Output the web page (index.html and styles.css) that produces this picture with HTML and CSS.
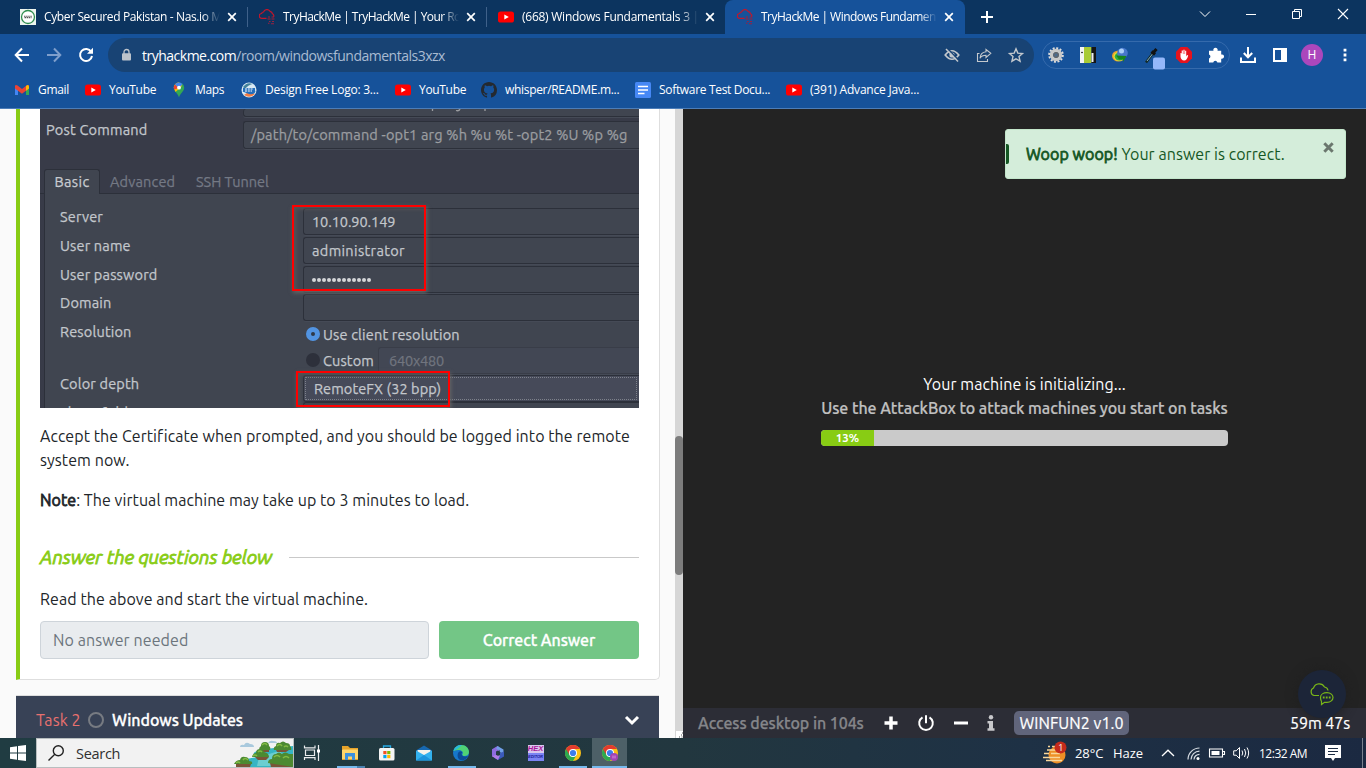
FILE: index.html
```html
<!DOCTYPE html>
<html lang="en">
<head>
<meta charset="utf-8">
<title>TryHackMe | Windows Fundamentals 3</title>
<link rel="stylesheet" href="styles.css">
</head>
<body>
<svg class="defs" width="0" height="0">
  <defs>
    <symbol id="x" viewBox="0 0 10 10"><path d="M1.2 1.2 8.8 8.8M8.8 1.2 1.2 8.8" stroke="currentColor" stroke-width="1.7" fill="none"/></symbol>
    <symbol id="xb" viewBox="0 0 10 10"><path d="M1.2 1.2 8.8 8.8M8.8 1.2 1.2 8.8" stroke="currentColor" stroke-width="2.7" fill="none"/></symbol>
    <symbol id="yt" viewBox="0 0 16 12"><rect y=".4" width="16" height="11.2" rx="2.6" fill="#f00"/><path d="M6.3 3.4 10.8 6 6.3 8.6z" fill="#fff"/></symbol>
    <symbol id="thm" viewBox="0 0 16 16"><path d="M7.500 9.300H2.800A2.400 2.400 0 0 1 2.600 4.500 2 2 0 0 1 4.500 3 3.600 3.600 0 0 1 11 2.300 3 3 0 0 1 13.500 4.800 2.300 2.300 0 0 1 14.500 8" fill="none" stroke="#c4162b" stroke-width="1.200"/><path d="M9 8h2M12.500 8h2.500M8.500 10h3M12.500 10h3" stroke="#a81d35" stroke-width="1.100"/><path d="M10 12.500h1.500M13 12.500h2M9 14.300h1.500M12 14.800h3" stroke="#9b2040" stroke-width="1.100"/></symbol>
    <symbol id="chrome" viewBox="0 0 16 16"><circle cx="8" cy="8" r="8" fill="#fbc116"/><path d="M8 8 1.070 4A8 8 0 0 0 8 16l3.500-6z" fill="#2da94f"/><path d="M1.070 4A8 8 0 0 1 14.930 4H8L4.500 10z" fill="#e33b2e"/><circle cx="8" cy="8" r="4" fill="#fff"/><circle cx="8" cy="8" r="3.100" fill="#3b7ded"/></symbol>
  </defs>
</svg>

<header class="browser">
  <div class="tabs">
    <div class="tab tab-1">
      <svg class="fav" viewBox="0 0 16 16"><path d="M0 0h16v16H0z" fill="#eef5ef"/><circle cx="8" cy="8" r="6.500" fill="#fff" stroke="#2f8d4e" stroke-width="1.300"/><path d="M4 7.200h8M4.500 8.600h7" stroke="#555" stroke-width="1.100" stroke-dasharray="1.500 .6"/></svg>
      <span class="tab-title t1">Cyber Secured Pakistan - Nas.io M</span>
      <svg class="close"><use href="#x"/></svg>
    </div>
    <div class="tab tab-2">
      <svg class="fav"><use href="#thm"/></svg>
      <span class="tab-title t2">TryHackMe | TryHackMe | Your Ro</span>
      <svg class="close"><use href="#x"/></svg>
    </div>
    <div class="tab tab-3">
      <svg class="fav"><use href="#yt"/></svg>
      <span class="tab-title t3">(668) Windows Fundamentals 3 |</span>
      <svg class="close"><use href="#x"/></svg>
    </div>
    <div class="tab tab-active">
      <svg class="fav"><use href="#thm"/></svg>
      <span class="tab-title t4">TryHackMe | Windows Fundamen</span>
      <svg class="close"><use href="#x"/></svg>
    </div>
    <svg class="new-tab" viewBox="0 0 12 12"><path d="M6 0v12M0 6h12" stroke="#fff" stroke-width="2"/></svg>
    <div class="window-controls">
      <svg width="12" height="12" viewBox="0 0 12 12"><path d="M1 3.500 6 8.500 11 3.500" fill="none" stroke="#fff" stroke-width="1"/></svg>
      <svg width="12" height="12" viewBox="0 0 12 12"><path d="M1 6.500h10" stroke="#fff"/></svg>
      <svg width="12" height="12" viewBox="0 0 12 12"><path d="M1.500 3.500h7v7h-7zM3.500 3.500v-2h7v7h-2" fill="none" stroke="#fff"/></svg>
      <svg width="12" height="12" viewBox="0 0 12 12"><path d="M1 1l10 10M11 1 1 11" stroke="#fff" stroke-width="1.100"/></svg>
    </div>
  </div>

  <div class="toolbar">
    <svg class="nav" viewBox="0 0 16 16"><path d="M15 8H2M8 1.500 1.700 8 8 14.500" fill="none" stroke="#fff" stroke-width="2"/></svg>
    <svg class="nav dim" viewBox="0 0 16 16"><path d="M1 8h13M8 1.500 14.300 8 8 14.500" fill="none" stroke="#7f9fcc" stroke-width="2"/></svg>
    <svg class="nav" viewBox="0 0 16 16"><path d="M13.200 4.800A6 6 0 1 0 14 9" fill="none" stroke="#fff" stroke-width="2"/><path d="M15 .8v6H9z" fill="#fff"/></svg>
    <div class="omnibox">
      <svg width="9" height="12" viewBox="0 0 9 12"><rect y="4.300" width="9" height="7.200" rx="1" fill="#bcc3cb"/><path d="M2 5V3a2.500 2.500 0 0 1 5 0v2" fill="none" stroke="#bcc3cb" stroke-width="1.300"/></svg>
      <span class="url"><b>tryhackme.com</b>/room/windowsfundamentals3xzx</span>
      <div class="omni-actions">
        <svg width="16" height="16" viewBox="0 0 16 16"><path d="M1.200 8q6.800-8.500 13.600 0q-6.800 8.500-13.600 0z" fill="none" stroke="#c3c8cd" stroke-width="1.700"/><circle cx="8" cy="8" r="2.600" fill="#c3c8cd"/><path d="m3 1 12 12.500" stroke="#184374" stroke-width="1.500"/><path d="m2 2 12 12.500" stroke="#c3c8cd" stroke-width="1.500"/></svg>
        <svg width="16" height="16" viewBox="0 0 16 16"><path d="M3.500 6.500H1.500v8h10v-2.500" fill="none" stroke="#c3c8cd" stroke-width="1.100"/><path d="M10 2.500 14.800 6.300 10 10.500V8.200C7 8.200 5.200 9 4 11.200 4.300 7.500 6.500 5 10 4.700z" fill="none" stroke="#c3c8cd" stroke-width="1.100"/></svg>
        <svg width="16" height="16" viewBox="0 0 16 16"><path d="m8 1.800 1.800 4.300 4.700.4L11 9.600l1.100 4.600L8 11.800l-4.100 2.400L5 9.600 1.500 6.500l4.700-.4z" fill="none" stroke="#c3c8cd" stroke-width="1.400"/></svg>
      </div>
    </div>
    <div class="extensions">
      <svg width="16" height="16" viewBox="0 0 16 16"><circle cx="8" cy="8" r="6.800" fill="none" stroke="#ddd" stroke-width="2" stroke-dasharray="2 1.560"/><circle cx="8" cy="8" r="4.500" fill="none" stroke="#c9c9c9" stroke-width="3.400"/><circle cx="8" cy="8" r="2.300" fill="#4c6b8d" stroke="#666" stroke-width="1.200"/></svg>
      <svg width="16" height="16" viewBox="0 0 16 16"><path d="M0 0h4v16H0z" fill="#f4f4f4"/><path d="M4 0h7.500v16H4z" fill="#a9cb35"/><path d="M11.500 0H16v16h-4.500z" fill="#151515"/><circle cx="2" cy="5.500" r=".8"/><path d="M11.500 6h2v9h-2z" fill="#eee"/></svg>
      <svg width="16" height="16" viewBox="0 0 16 16"><ellipse cx="6.500" cy="9" rx="6.500" ry="5.500" fill="#e8a22d"/><ellipse cx="7" cy="9.500" rx="5.500" ry="4.500" fill="#e9dd35"/><ellipse cx="7.500" cy="9.500" rx="4.800" ry="4" fill="#2cae47"/><circle cx="10.500" cy="6" r="5.300" fill="#4777cb"/><circle cx="9.500" cy="4" r="2.500" fill="#a9cff7"/><path d="M4 8.500 14.500 9 11 15V12.500H7z" fill="#16851c"/></svg>
      <svg width="20" height="22" viewBox="0 0 20 22"><path d="M2 15.500 9 6" stroke="#142c28" stroke-width="2.500"/><path d="m3 14 5.500-7" stroke="#93bad0" stroke-width=".9"/><path d="M7.500 4.500 11 7.500M9 6l3.500-4" stroke="#111" stroke-width="3"/><rect x="9" y="10.500" width="12" height="12" rx="2" fill="#94b7fa"/></svg>
      <svg width="16" height="16" viewBox="0 0 16 16"><path d="M4.700 0h6.600L16 4.700v6.600L11.300 16H4.700L0 11.300V4.700z" fill="#e6131d"/><path d="M4.500 6v3.500c0 2 1.500 4 3.700 4 2 0 3-1.500 4-5l-1.100-.4-.9 1.300V3.800H9.100V7h-.5V2.800H7.400V7h-.5V3.600H5.700V7l-.3-1z" fill="#fff"/></svg>
      <svg width="16" height="16" viewBox="0 0 16 16"><path d="M1 3.800h4.500a2.200 2.200 0 1 1 4 0h3.700v3.700a2.200 2.200 0 1 1 0 4.200v3.700H9.400a2.200 2.200 0 0 0-4.200 0H1v-3.900a2.200 2.200 0 0 0 0-4.100z" fill="#fff"/></svg>
    </div>
    <div class="chrome-actions">
      <svg width="16" height="16" viewBox="0 0 16 16"><path d="M8 0v10M3.800 6 8 10.300 12.200 6M1 10.500V15h14v-4.500" fill="none" stroke="#fff" stroke-width="2"/></svg>
      <svg width="14" height="14" viewBox="0 0 14 14"><path d="M1 1h12v12H1z" fill="none" stroke="#fff" stroke-width="2"/><path d="M8 0h6v14H8z" fill="#fff"/></svg>
      <span class="avatar">H</span>
      <svg width="4" height="14" viewBox="0 0 4 14"><path d="M.6.800h2.800v2.800H.6zM.6 5.600h2.800v2.800H.6zM.6 10.400h2.800v2.800H.6z" fill="#fff"/></svg>
    </div>
  </div>

  <nav class="bookmarks">
    <a class="bm bm-gmail"><svg width="16" height="12" viewBox="0 0 16 12"><path d="M2.500 11V4" stroke="#4285f4" stroke-width="3"/><path d="M13.500 11V4" stroke="#34a853" stroke-width="3"/><path d="M1 1.500v3L8 9.700l7-5.200v-3q-1-1-2.500 0L8 5 3.500 1.500Q2 .500 1 1.500z" fill="#ea4335"/><path d="M12 2 13.500 1Q15 1 15 2.500v2L12 6.700z" fill="#fbbc04"/></svg><span>Gmail</span></a>
    <a class="bm bm-yt"><svg width="16" height="12"><use href="#yt"/></svg><span>YouTube</span></a>
    <a class="bm bm-maps"><svg width="12" height="16" viewBox="0 0 12 16"><path d="M6 .5a5.200 5.200 0 0 1 5.200 5.200C11.200 9.500 7 11 6 15.500 5 11 .8 9.500.8 5.700A5.200 5.200 0 0 1 6 .5z" fill="#34a853"/><path d="M.8 5.700C.8 2.500 3.500.5 6 .5L9 4 2.500 10z" fill="#fbbc04"/><path d="M2 2.500 6 6 1 7.500Q.2 4.500 2 2.500z" fill="#ea4335"/><path d="M2 2.500Q5-1 9.500 2L6 6z" fill="#4285f4"/><circle cx="6" cy="5.700" r="1.900" fill="#fff"/></svg><span>Maps</span></a>
    <a class="bm bm-logo"><svg width="16" height="16" viewBox="0 0 16 16"><circle cx="8" cy="8" r="7.500" fill="#d9e9f4"/><path d="M3 13Q8 8 14 12 9 17 3 13z" fill="#f47b42"/><path d="M1.500 9.500Q8 4 14.500 9q-1 4-6.500 3z" fill="#246fbd"/><path d="M2 5Q6-.5 11.500 2 7 3 4 7z" fill="#41819b"/><path d="M2 6h12v3.500H2z" fill="#246fbd"/><path d="M4 7h8M4 9h7" stroke="#fff" stroke-width="1" stroke-dasharray="2 .8"/></svg><span>Design Free Logo: 3...</span></a>
    <a class="bm bm-yt2"><svg width="16" height="12"><use href="#yt"/></svg><span>YouTube</span></a>
    <a class="bm bm-git"><svg width="16" height="16" viewBox="0 0 16 16"><path fill="#24292f" d="M8 0C3.580 0 0 3.580 0 8c0 3.540 2.290 6.530 5.470 7.590.4.070.55-.17.55-.38v-1.490c-2.010.37-2.530-.49-2.690-.94-.09-.23-.48-.94-.82-1.130-.28-.15-.68-.52-.01-.53.63-.01 1.080.58 1.230.82.72 1.210 1.870.87 2.330.66.07-.52.28-.87.510-1.070-1.780-.2-3.640-.89-3.640-3.950 0-.87.31-1.590.82-2.150-.08-.2-.36-1.020.08-2.120 0 0 .67-.21 2.200.82a7.600 7.600 0 0 1 4 0c1.530-1.040 2.200-.82 2.200-.82.44 1.100.16 1.920.08 2.120.51.560.82 1.270.82 2.150 0 3.070-1.870 3.750-3.650 3.950.29.250.54.730.54 1.480v2.200c0 .21.15.46.55.38A8 8 0 0 0 16 8c0-4.420-3.580-8-8-8z"/></svg><span>whisper/README.m...</span></a>
    <a class="bm bm-doc"><svg width="16" height="16" viewBox="0 0 16 16"><rect width="16" height="16" rx="1.500" fill="#4688f5"/><path d="M3 4.500h10M3 8h10M3 11.500h6.500" stroke="#fff" stroke-width="1.600"/></svg><span>Software Test Docu...</span></a>
    <a class="bm bm-java"><svg width="16" height="12"><use href="#yt"/></svg><span>(391) Advance Java...</span></a>
  </nav>
</header>

<main class="workspace">
  <section class="room">
    <article class="task-card">
      <div class="remmina">
        <div class="pre-row"><span></span><div class="field"><svg width="70" height="3" viewBox="0 0 70 3"><path d="M8.500 0v2M61 0v2M32 1.500q3 1 4-1.500" fill="none" stroke="#9b9da0" stroke-width="1.300"/></svg></div></div>
        <div class="post-row"><span>Post Command</span><div class="field">/path/to/command -opt1 arg %h %u %t -opt2 %U %p %g</div></div>
        <div class="rtabs"><span class="rtab on">Basic</span><span class="rtab adv">Advanced</span><span class="rtab ssh">SSH Tunnel</span></div>
        <div class="rpanel">
          <div class="rrow"><span>Server</span><div class="field ip">10.10.90.149</div></div>
          <div class="rrow"><span>User name</span><div class="field admin">administrator</div></div>
          <div class="rrow"><span>User password</span><div class="field dots"><i></i><i></i><i></i><i></i><i></i><i></i><i></i><i></i><i></i><i></i><i></i><i></i></div></div>
          <div class="rrow"><span>Domain</span><div class="field"></div></div>
          <div class="rrow res"><span>Resolution</span><div class="radio-line"><i class="radio checked"></i><span class="ucr">Use client resolution</span></div></div>
          <div class="rrow custom"><span></span><div class="radio-line"><i class="radio"></i><span class="cus">Custom</span><div class="field size">640x480</div></div></div>
          <div class="rrow depth"><span>Color depth</span><div class="field combo">RemoteFX (32 bpp)</div></div>
          <div class="rrow share"><span>Share folder</span><div class="field"></div></div>
        </div>
        <div class="mark mark-login"></div>
        <div class="mark mark-depth"></div>
      </div>
      <p class="copy"><span class="l1">Accept the Certificate when prompted, and you should be logged into the remote</span><br><span class="l2">system now.</span></p>
      <p class="copy l3"><strong>Note</strong>: The virtual machine may take up to 3 minutes to load.</p>
      <h2 class="questions"><span>Answer the questions below</span></h2>
      <p class="copy question">Read the above and start the virtual machine.</p>
      <div class="answer"><div class="answer-input">No answer needed</div><div class="answer-btn">Correct Answer</div></div>
    </article>
    <article class="task-two">
      <span class="task-no">Task 2</span><i class="ring"></i><span class="task-name">Windows Updates</span>
      <svg class="chev" width="16" height="10" viewBox="0 0 16 10"><path d="m2 2 6 6 6-6" fill="none" stroke="#fff" stroke-width="3"/></svg>
    </article>
  </section>
  <div class="scroll"><div class="thumb"></div><svg width="8" height="9" viewBox="0 0 8 9"><path d="M1 2h7v7H1z" fill="#fff"/><path d="M4 8h1M6 6h1M7 4h1M6.500 8h1" stroke="#555"/></svg></div>

  <section class="machine">
    <div class="screen">
      <div class="toast"><i class="toast-bar"></i><span class="toast-text"><strong>Woop woop!</strong> Your answer is correct.</span><svg class="toast-x"><use href="#xb"/></svg></div>
      <div class="init">
        <div class="init-title">Your machine is initializing...</div>
        <div class="init-sub">Use the AttackBox to attack machines you start on tasks</div>
        <div class="progress"><div class="bar" style="width:13%">13%</div></div>
      </div>
      <div class="chat"><svg width="26" height="24" viewBox="0 0 26 24"><path d="M10 13.500H5A4 4 0 0 1 4.500 6 6 6 0 0 1 15.500 5 4 4 0 0 1 19 8.500" fill="none" stroke="#79b518" stroke-width="1.200"/><path d="M12.500 19.500V22.500l3-2.200h2.500c3.500 0 6-2.200 6-4.800s-2.500-4.800-6-4.800-6.500 1.800-6.500 4.800c0 1.800.5 3 1 4z" fill="none" stroke="#79b518" stroke-width="1.200"/><path d="M13.800 15.500h8" stroke="#79b518" stroke-width="1.800" stroke-dasharray="1.800 1.200"/></svg></div>
    </div>
    <footer class="machine-bar">
      <span class="access">Access desktop in 104s</span>
      <svg class="m-plus" width="14" height="14" viewBox="0 0 14 14"><path d="M7 .5v13M.5 7h13" stroke="#fff" stroke-width="3.500"/></svg>
      <svg class="m-power" width="16" height="16" viewBox="0 0 16 16"><path d="M4.500 2.300a6.800 6.800 0 1 0 7 0M8 .2v8" fill="none" stroke="#fff" stroke-width="2"/></svg>
      <svg class="m-minus" width="14" height="14" viewBox="0 0 14 14"><path d="M0 7h14" stroke="#fff" stroke-width="3"/></svg>
      <svg class="m-info" width="8" height="16" viewBox="0 0 8 16"><circle cx="4" cy="2.200" r="2.200" fill="#c8c8cb"/><path d="M.5 6H6v7.300h1.500v2.500h-7v-2.500H2V8.400H.5z" fill="#c8c8cb"/></svg>
      <span class="badge">WINFUN2 v1.0</span>
      <span class="timer">59m 47s</span>
    </footer>
  </section>
</main>

<footer class="taskbar">
  <div class="start"><svg width="16" height="16" viewBox="0 0 16 16"><path d="M0 2.200 7 1.200V7.500H0zM8 1 16 0v7.500H8zM0 8.500h7v6.300l-7-1zM8 8.500h8V16l-8-1.100z" fill="#fff"/></svg></div>
  <div class="search">
    <svg width="16" height="16" viewBox="0 0 16 16"><circle cx="10.300" cy="5.700" r="5" fill="none" stroke="#222" stroke-width="1.400"/><path d="M6.800 9.200.5 15.500" stroke="#222" stroke-width="1.400"/></svg>
    <span>Search</span>
    <svg class="islands" width="60" height="27" viewBox="0 0 60 27"><path d="M3 27Q8 18 27 17 12 13 32 9l28-3v21z" fill="#35b5c4"/><path d="m26 17 20-6 8 6-14 9H24z" fill="#6bced0"/><path d="M7 7q0-3 4-2 2-4 6-1 4 0 4 3zM35 3q2-3 5-2 4 0 4 2z" fill="#a9c9dd"/><path d="M27 10h9v2h-8zM43 10h13l-3 2H44zM22 17h14l-3 3H25zM37 23h22v4H38zM3 24h15l-1 3H3z" fill="#7a5538"/><path d="M26 10q0-3 2-4 0-4 4-4t4 4q2 1 1 4zM41 10q-1-3 2-4 0-4 4-3 3-3 6 0 4 0 4 3 2 2 1 4zM19 17q1-4 4-4 0-4 4-4 4 1 4 3 5 1 5 5zM35 23q0-4 4-4 0-5 4-5 3-3 6 0 3-3 7 0h4v13zM1 24q2-4 6-4 1-4 5-3 4 0 4 4 4 0 3 3z" fill="#4c8a31"/><path d="M29 5q3-3 5 0M44 6q3-3 5 0M51 7q2-2 4 0M25 12q2-2 4 0M20 16q2-2 4 0M41 17q3-3 6 0M50 18q3-3 6 0M10 20q2-3 5 0M3 23q2-2 4 0" fill="none" stroke="#83ba43" stroke-width="1.600"/></svg>
  </div>
  <div class="apps">
    <div class="app"><svg width="17" height="16" viewBox="0 0 17 16"><path d="M.5.5v2.300h10.500V.5M.5 15v-2.300h10.500V15M1.500 5h9v5.500h-9zM14.500 0v16" fill="none" stroke="#e9eced" stroke-width="1.200"/><path d="M13 4.500h3v3h-3z" fill="#fff"/></svg></div>
    <div class="app run explorer"><svg width="16" height="14" viewBox="0 0 16 14"><path d="M0 0h6l2 2h8v12H0z" fill="#e6a32a"/><path d="M1 3.500h15V13H0V4z" fill="#ffd66b"/><path d="M3 7h10v7h-3v-3.500H6V14H3z" fill="#3c91df"/></svg></div>
    <div class="app"><svg width="16" height="16" viewBox="0 0 16 16"><path d="M4.500 4V1h7v3" fill="none" stroke="#27a9e3" stroke-width="1.300"/><rect y="3" width="15.500" height="12.500" rx="1.500" fill="#f4f4f4"/><path d="M4.300 6h3.200v3.200H4.300z" fill="#f25022"/><path d="M8.200 6h3.200v3.200H8.200z" fill="#7fba00"/><path d="M4.300 10h3.200v3.200H4.300z" fill="#00a4ef"/><path d="M8.200 10h3.200v3.200H8.200z" fill="#ffb900"/></svg></div>
    <div class="app"><svg width="16" height="16" viewBox="0 0 16 16"><path d="m0 5.500 8-5 8 5V15H0z" fill="#1768b0"/><path d="M1.500 5h13v7h-13z" fill="#f3f3ec"/><path d="M0 5.500 8 10l8-4.500V15.500H0z" fill="#32b1ee"/><path d="m0 15.500 8-5.500 8 5.500z" fill="#1b94dc"/></svg></div>
    <div class="app run"><svg width="16" height="16" viewBox="0 0 16 16"><circle cx="8" cy="8" r="8" fill="#1677cb"/><path d="M.5 6C2 1 5.500 0 8.500 0 13 0 16 3.500 16 7c0 3-2.500 4.200-5 4-2-.2-2-1.300-1.200-2.300C10.500 6 7 3.500.5 6z" fill="#4fd275"/><path d="M.5 6C2 1 6 0 9 .1 5 4 4 4 .5 6z" fill="#29b9dc"/><path d="M5 8q1.500-3 4.500-1Q7.800 8.500 9 10.200q2 2 6 .8-3 5.500-8 4Q3.500 12.500 5 8z" fill="#0c4b96"/></svg></div>
    <div class="app"><svg width="16" height="16" viewBox="0 0 16 16"><path d="M7.500 1 2 4.200v7L6 13V8l3-2V2z" fill="#8e6be0"/><path d="m7.500 1 6 3.500V9L9.500 7V5L6 4z" fill="#6f9fe8"/><path d="M14 6.500v5L8 15l-4-2.200L10 10V8z" fill="#3b5bbb"/><path d="M2 11.200 6 10l4 .500L8 15z" fill="#af7ce7"/><path d="M6 6.500 8 5.500l2 1.200v3L8 10.800 6 9.700z" fill="#223a42"/></svg></div>
    <div class="app"><div class="hex"><b>HEX</b><b>EDITOR</b></div></div>
    <div class="app run chr"><svg width="16" height="16"><use href="#chrome"/></svg></div>
    <div class="app run active"><svg width="16" height="16" viewBox="0 0 16 16"><use href="#chrome"/><circle cx="12" cy="12" r="4" fill="#a243b5"/><path d="M10 11.200h4M10 12.800h4" stroke="#cf8bd9" stroke-width=".8"/></svg></div>
  </div>
  <div class="tray">
    <svg class="haze" width="26" height="24" viewBox="0 0 26 24"><circle cx="15" cy="14" r="8.500" fill="#ee8f25"/><path d="M6 5.500h2M10 5.500h5M5 9h11M9 12.500h9M2 12.500h5M1 16.500h17M4 19.500h16" stroke="#f9d79b" stroke-width="1.700"/><circle cx="18.500" cy="6.500" r="6" fill="#c42b1c"/><text x="16.300" y="10.200" class="haze-n">1</text></svg>
    <span class="temp">28°C</span><span class="cond">Haze</span>
    <svg class="t-up" width="14" height="8" viewBox="0 0 14 8"><path d="m1 7 6-5.800L13 7" fill="none" stroke="#fff" stroke-width="1.300"/></svg>
    <svg class="t-wifi" width="13" height="13" viewBox="0 0 13 13"><path d="M1 12.500A11.500 11.500 0 0 1 12.500 1M4 12.500a8.500 8.500 0 0 1 8.500-8.300M7 12.500a5.500 5.500 0 0 1 5.500-5.200" fill="none" stroke="#d5dbe1" stroke-width="1.200"/><circle cx="11" cy="11.500" r="1.500" fill="#fff"/></svg>
    <svg class="t-bat" width="16" height="10" viewBox="0 0 16 10"><path d="M.5 1h13v8H.5zM14 3.500h1.500v3H14" fill="none" stroke="#fff" stroke-width="1.100"/><path d="M2.500 3h8v4h-8z" fill="#fff"/></svg>
    <svg class="t-vol" width="17" height="14" viewBox="0 0 17 14"><path d="M.7 4.800h2.500L6.500 1.500v11L3.200 9.200H.7zM9 4.500q1.500 2.500 0 5M11.500 3q2.500 4 0 8M14 1.500q3.300 5.500 0 11" fill="none" stroke="#fff" stroke-width="1"/></svg>
    <span class="clock">12:32 AM</span>
    <svg class="t-note" width="16" height="16" viewBox="0 0 16 16"><path d="M0 0h16v13H10l-2 3-2-3H0z" fill="#fff"/><path d="M3 3.500h10M3 6.500h10M3 9.500h7" stroke="#1b2b42" stroke-width="1"/></svg>
  </div>
</footer>
</body>
</html>
```
FILE: styles.css
```css
* { box-sizing: border-box; }
body { margin: 0; width: 1366px; height: 768px; overflow: hidden; display: flex; flex-direction: column; background: #232323; font-family: "Segoe UI", "Open Sans", sans-serif; white-space: nowrap; }
svg { display: block; flex: none; overflow: visible; }
.defs { position: absolute; }
span { flex: none; }

/* Browser chrome */
.browser { height: 109px; flex: none; background: #16529a; border-bottom: 1px solid #4c7db8; color: #fff; font-size: 12px; }
.tabs { height: 38px; background: linear-gradient(#0c345f 34px, #16529a 34px); display: flex; position: relative; }
.tab { height: 34px; display: flex; align-items: center; }
.fav { width: 16px; height: 16px; }
.close { width: 10px; height: 10px; }
.tab-title { width: 176px; margin: 0 7px 0 8px; line-height: 18px; mask-image: linear-gradient(90deg, #000 90%, transparent); letter-spacing: -.38px; }
.tab-1 { width: 248px; padding-left: 20px; }
.tab-2 { width: 239px; padding-left: 11px; }
.tab-3 { width: 238px; padding-left: 11px; }
.tab-1::after, .tab-2::after { content: ""; width: 1px; height: 20px; background: #3f618a; margin-left: auto; }
.tab-active { width: 240px; padding-left: 12px; background: #16529a; border-radius: 8px 8px 0 0; }
.t2 { letter-spacing: -.55px; }
.t3 { letter-spacing: -.25px; }
.t4 { letter-spacing: -.53px; }
.new-tab { width: 12px; height: 12px; margin: 11px 0 0 16px; }
.window-controls { margin: 8px 17px 0 auto; display: flex; gap: 34px; }
.toolbar { height: 34px; display: flex; align-items: center; padding-left: 14px; }
.nav { width: 16px; height: 16px; margin-right: 16px; }
.omnibox { width: 926px; height: 34px; margin-left: -2px; border-radius: 17px; background: #184374; display: flex; align-items: center; padding: 0 10px 0 14px; }
.url { margin-left: 11px; font-size: 14px; letter-spacing: -.5px; color: #a9bbd2; }
.url b { font-weight: 400; color: #fff; }
.omni-actions { display: flex; gap: 16px; margin-left: auto; }
.extensions { width: 188px; height: 28px; margin-left: 8px; border: 1px solid #356aac; border-radius: 14px; display: flex; align-items: center; gap: 16px; padding-left: 5px; }
.extensions svg:nth-child(4) { margin: 6px -4px 0 0; }
.chrome-actions { display: flex; align-items: center; margin-left: 10px; }
.chrome-actions svg:nth-child(2) { margin: 0 14px 0 17px; }
.avatar { width: 22px; height: 22px; border-radius: 50%; background: #ab47bc; text-align: center; line-height: 22px; margin-right: 20px; }
.bookmarks { height: 36px; display: flex; align-items: center; padding-left: 14px; }
.bm { display: flex; align-items: center; gap: 8px; height: 20px; flex: none; letter-spacing: -.32px; line-height: 18px; }
.bm-gmail { width: 71px; } .bm-yt { width: 88px; } .bm-maps { width: 68px; gap: 10px; } .bm-logo { width: 154px; letter-spacing: -.23px; }
.bm-yt2 { width: 86px; } .bm-git { width: 154px; } .bm-doc { width: 151px; } .bm-java { letter-spacing: -.2px; }

/* Room column */
.workspace { height: 629px; flex: none; display: flex; }
.room { width: 675px; background: #fafafa; padding-left: 16px; font-family: Ubuntu, "Noto Sans", sans-serif; color: #212529; font-size: 16px; overflow: hidden; }
.task-card { width: 644px; height: 571px; background: #fff; border: 1px solid #dedede; border-width: 0 1px 1px 4px; border-left-color: #88cc14; border-radius: 0 0 5px 0; padding: 0 20px; }
.copy { margin: 16px 0; line-height: 24px; }
.copy strong, .toast strong { font-weight: 400; -webkit-text-stroke: .8px currentColor; }
.l1 { letter-spacing: .06px; }
.l2, .question { letter-spacing: .08px; }
.l3 { letter-spacing: .06px; }
.questions { display: flex; align-items: center; gap: 17px; margin: 32px 0 16px; height: 27px; color: #88cc14; font-size: 19.200px; font-style: italic; font-weight: 400; -webkit-text-stroke: .8px; letter-spacing: -.12px; }
.questions span { margin-top: -1px; }
.questions::after { content: ""; flex: 1; height: 1px; background: #c9c9c9; }
.question { margin: 0 0 10px; }
.answer { display: grid; grid-template-columns: 389px 200px; gap: 10px; height: 38px; line-height: 36px; letter-spacing: .08px; }
.answer-input { background: #e9ecef; border: 1px solid #ced4da; border-radius: 4px; color: #6c757d; padding-left: 12px; }
.answer-btn { background: #73c686; border-radius: 4px; color: #fff; text-align: center; line-height: 38px; font-weight: 500; letter-spacing: -.1px; -webkit-text-stroke: .3px; }
.task-two { width: 643px; height: 44px; margin-top: 15px; border-top: 1px solid #dedede; background: #384256; display: flex; align-items: center; padding: 5px 19px 0 20px; color: #fff; }
.task-no { color: #e8716f; width: 52px; letter-spacing: .08px; }
.ring { width: 16px; height: 16px; border: 2px solid #777b82; border-radius: 50%; margin-right: 8px; }
.task-name { font-weight: 500; letter-spacing: -.07px; -webkit-text-stroke: .3px; }
.chev { margin-left: auto; }
.scroll { width: 8px; background: #d6d6d6; padding-top: 327px; display: flex; flex-direction: column; }
.thumb { height: 139px; border-radius: 4px; background: #7c7c7c; }
.scroll svg { margin-top: auto; }

/* Connection dialog shown in the task */
.remmina { height: 299px; overflow: hidden; position: relative; background: #383b48; color: #c3c7cc; font-size: 14.500px; letter-spacing: .17px; -webkit-text-stroke: .25px; }
.remmina .field { background: #404550; border: 1px solid #2c303a; border-right: 0; border-radius: 3px 0 0 3px; box-shadow: 0 1px #454a56; }
.pre-row, .post-row { display: grid; grid-template-columns: 203px 1fr; }
.pre-row { height: 12px; }
.pre-row .field { height: 8px; padding-left: 180px; border-top: 0; }
.post-row { height: 48px; }
.post-row span { padding-left: 6px; line-height: 17px; letter-spacing: .22px; }
.post-row .field { height: 28px; padding-left: 7px; line-height: 26px; color: #9b9da0; letter-spacing: .18px; }
.rtabs { height: 25px; display: flex; padding-left: 4px; line-height: 25px; color: #747985; box-shadow: inset 0 -1px #2c303a; }
.rtab.on { width: 56px; text-align: center; line-height: 23px; background: #404550; border: 1px solid #2c303a; border-bottom: 0; border-radius: 3px 3px 0 0; color: #c9ccd0; letter-spacing: .4px; }
.adv { margin-left: 10px; width: 86px; }
.ssh { letter-spacing: 0; }
.rpanel { margin-left: 4px; height: 220px; background: #404550; border-left: 1px solid #2c303a; padding: 14px 0 0 15px; }
.rrow { display: grid; grid-template-columns: 243px 1fr; height: 28.800px; }
.rrow > span { line-height: 18px; }
.rrow .field { height: 27px; padding-left: 8px; line-height: 25px; }
.rrow .ip { letter-spacing: -.08px; }
.rrow .admin { letter-spacing: .35px; }
.dots { display: flex; align-items: center; gap: 1px; }
.rrow .dots { padding-top: 2px; }
.dots i { width: 4px; height: 4px; border-radius: 50%; background: #d3d5d7; }
.radio-line { display: flex; align-items: center; height: 22px; padding-left: 3px; }
.radio { width: 14px; height: 14px; border-radius: 50%; background: #2d303b; margin-right: 3px; }
.radio.checked { background: #2f3947; border: 5px solid #5294e2; }
.res { height: 26px; }
.custom { height: 26px; }
.rrow .size { margin-left: 3px; padding-left: 10px; flex: 1; height: 27px; color: #71757f; border-color: #393d48; background: #424754; letter-spacing: -.2px; }
.cus { width: 52px; }
.depth { height: 27px; }
.depth > span { line-height: 17px; }
.rrow .combo { background: #464a59; outline: 1px dotted #7d818b; outline-offset: -3px; padding-left: 10px; line-height: 25px; letter-spacing: .1px; }
.share > span { line-height: 22px; }
.mark { position: absolute; border: 2px solid #f00; box-shadow: 1px 2px 4px #666, inset 2px 2px 4px #555; }
.mark-login { left: 252px; top: 96px; width: 134px; height: 86px; }
.mark-depth { left: 256px; top: 262px; width: 154px; height: 36px; }

/* Machine column */
.machine { width: 683px; display: flex; flex-direction: column; font-family: Ubuntu, "Noto Sans", sans-serif; font-size: 16px; }
.screen { height: 599px; padding-top: 20px; position: relative; }
.toast { width: 341px; height: 50px; margin-left: 322px; border: 1px solid #c3e6cb; border-radius: 3px; background: #d4edda; color: #155724; display: flex; align-items: center; }
.toast-bar { width: 3px; height: 20px; background: #155724; border-radius: 0 2px 2px 0; }
.toast-text { margin-left: 17px; letter-spacing: .05px; width: 260px; }
.toast-x { width: 11px; height: 11px; margin: -13px 0 0 37px; color: #6b776e; }
.init { width: 407px; margin: 194px 0 0 138px; line-height: 24px; text-align: center; color: #fff; }
.init-title { letter-spacing: .08px; margin-top: -1px; }
.init-sub { color: #c0c0c0; font-weight: 500; letter-spacing: -.07px; -webkit-text-stroke: .2px; }
.progress { height: 16px; margin-top: 10px; border-radius: 4px; background: #cacaca; overflow: hidden; }
.bar { height: 16px; background: #88cc14; font-size: 11.500px; line-height: 16px; font-weight: 600; }
.chat { position: absolute; left: 615px; top: 561px; width: 48px; height: 48px; border-radius: 50%; background: #1c2538; padding: 12px 0 0 11px; box-shadow: 0 0 12px #1f1f1f; z-index: 2; }
.machine-bar { height: 30px; background: #2c2d36; display: flex; align-items: center; padding: 0 16px 0 15px; color: #fff; }
.access { width: 186px; color: #85868a; font-weight: 500; letter-spacing: -.07px; -webkit-text-stroke: .25px; }
.m-power { margin-left: 20px; } .m-minus { margin-left: 20px; } .m-info { margin-left: 19px; }
.badge { width: 115px; height: 24px; margin-left: 19px; border-radius: 5px; background: #61657b; text-align: center; line-height: 24px; letter-spacing: .05px; -webkit-text-stroke: .2px; }
.timer { margin-left: auto; letter-spacing: -.08px; z-index: 3; -webkit-text-stroke: .2px; }

/* Windows taskbar */
.taskbar { height: 30px; flex: none; display: flex; background: linear-gradient(90deg, #203c42, #22373f 50%, #1e3145 75%, #1b2941); color: #fff; font-size: 12px; }
.start { width: 36px; padding: 7px 0 0 10px; }
.search { width: 258px; background: #f2f2f2; border: 1px solid #b8bebf; display: flex; align-items: center; padding-left: 11px; color: #303030; font-size: 14.500px; }
.search span { margin-left: 12px; letter-spacing: -.3px; }
.islands { margin: 1px 0 0 auto; }
.apps { display: flex; }
.app { width: 37px; display: flex; align-items: center; justify-content: center; position: relative; padding-left: 1px; }
.run::after { content: ""; position: absolute; bottom: 0; left: 6px; width: 28px; height: 2px; background: #76b9ed; }
.explorer::after { background: linear-gradient(90deg, #76b9ed 20px, #4b82b0 20px); }
.app:first-child { padding-left: 0; }
.app.chr { padding-left: 2px; }
.app.active { background: linear-gradient(90deg, transparent 2px, #4d6067 2px); padding-left: 2px; }
.active::after { left: 2px; width: 35px; }
.hex { width: 16px; height: 16px; background: #d9c7ee; color: #a91798; display: flex; flex-direction: column; line-height: 8px; text-align: center; font-family: "Liberation Sans", sans-serif; margin-left: 1px; }
.hex b { font-size: 7.500px; font-style: italic; }
.hex b + b { font-size: 4px; background: #7b83f4; color: #171795; }
.tray { display: flex; align-items: center; width: 325px; margin-left: auto; border-right: 1px solid #79818e; margin-right: 3px; }
.haze { margin-left: 4px; }
.haze-n { font-size: 9px; fill: #fff; font-family: "Open Sans", sans-serif; }
.temp { margin-left: 7px; width: 38px; font-size: 13px; letter-spacing: -.1px; }
.cond { width: 48px; font-size: 13px; letter-spacing: -.05px; }
.t-wifi { margin-left: 12px; } .t-bat { margin-left: 9px; } .t-vol { margin-left: 8px; }
.clock { margin-left: 9px; width: 67px; letter-spacing: -.5px; }
.t-note { margin-left: -1px; }
```
